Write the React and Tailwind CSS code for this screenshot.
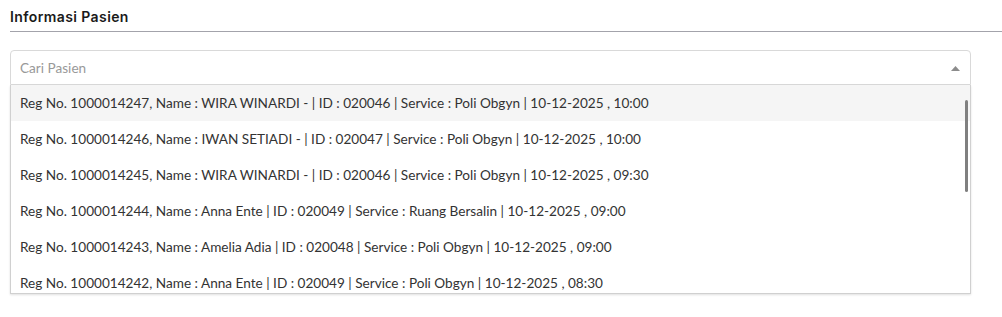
export default function App() {
  const rows = [
    "Reg No. 1000014247, Name : WIRA WINARDI - | ID : 020046 | Service : Poli Obgyn | 10-12-2025 , 10:00",
    "Reg No. 1000014246, Name : IWAN SETIADI - | ID : 020047 | Service : Poli Obgyn | 10-12-2025 , 10:00",
    "Reg No. 1000014245, Name : WIRA WINARDI - | ID : 020046 | Service : Poli Obgyn | 10-12-2025 , 09:30",
    "Reg No. 1000014244, Name : Anna Ente | ID : 020049 | Service : Ruang Bersalin | 10-12-2025 , 09:00",
    "Reg No. 1000014243, Name : Amelia Adia | ID : 020048 | Service : Poli Obgyn | 10-12-2025 , 09:00",
    "Reg No. 1000014242, Name : Anna Ente | ID : 020049 | Service : Poli Obgyn | 10-12-2025 , 08:30",
  ];
  return (
    <div className="w-[1002px] h-[317px] bg-white pl-[10px] pt-[7px]" style={{ fontFamily: "Lato, 'Liberation Sans', sans-serif" }}>
      <div className="text-[14px] font-semibold text-[#1a1a1a] leading-[20px] tracking-[0.4px]" style={{ fontFamily: "Inter, 'Open Sans', sans-serif" }}>
        Informasi Pasien
      </div>
      <div className="h-px bg-[#a3a3ab] mt-[4px]" />
      <div className="w-[961px] mt-[18px] relative">
        <div className="h-[35px] border border-[#d9d9d9] rounded-t-[4px] flex items-center justify-between pl-[9px] pr-[10px] pt-px">
          <span className="text-[13.6px] text-[#999999]">Cari Pasien</span>
          <svg width="9" height="5" viewBox="0 0 9 5"><path d="M0 5 L4.5 0 L9 5 Z" fill="#8c8c8c" /></svg>
        </div>
        <div className="relative h-[209px] overflow-hidden border-x border-b border-[#d0d0d0] shadow-[0_1px_2px_rgba(0,0,0,0.12)]">
          {rows.map((r, i) => (
            <div key={i} className={`h-[36px] flex items-center pl-[9px] pt-px text-[13.6px] text-[#333333] whitespace-nowrap ${i === 0 ? "bg-[#f5f5f5]" : "bg-white"}`}>
              {r}
            </div>
          ))}
          <div className="absolute right-[2px] top-[15px] w-[3px] h-[92px] rounded-sm bg-[#808080]" />
        </div>
      </div>
    </div>
  );
}
